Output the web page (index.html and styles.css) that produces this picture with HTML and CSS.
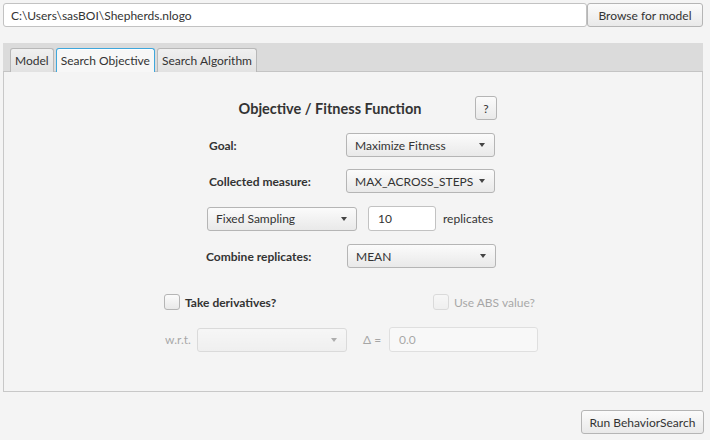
FILE: index.html
```html
<!DOCTYPE html>
<html>
<head>
<meta charset="utf-8">
<link rel="stylesheet" href="styles.css">
</head>
<body>
<div class="topbar">
  <div class="field path">C:\Users\sasBOI\Shepherds.nlogo</div>
  <div class="btn browse">Browse for model</div>
</div>

<div class="tabpane">
  <div class="tabheader">
    <div class="tab">Model</div>
    <div class="tab selected">Search Objective</div>
    <div class="tab">Search Algorithm</div>
  </div>
  <div class="tabcontent">
    <div class="row title-row">
      <div class="title">Objective / Fitness Function</div>
      <div class="btn help">?</div>
    </div>
    <div class="row goal-row">
      <div class="label w137">Goal:</div>
      <div class="combo w149"><span>Maximize Fitness</span><i class="arrow"></i></div>
    </div>
    <div class="row measure-row">
      <div class="label w137">Collected measure:</div>
      <div class="combo w149"><span>MAX_ACROSS_STEPS</span><i class="arrow"></i></div>
    </div>
    <div class="row sampling-row">
      <div class="combo w150"><span>Fixed Sampling</span><i class="arrow"></i></div>
      <div class="field reps">10</div>
      <div class="plain">replicates</div>
    </div>
    <div class="row combine-row">
      <div class="label w141">Combine replicates:</div>
      <div class="combo w149"><span>MEAN</span><i class="arrow"></i></div>
    </div>
    <div class="row deriv-row">
      <div class="check"></div>
      <div class="label">Take derivatives?</div>
      <div class="disabled abs">
        <div class="check"></div>
        <div class="plain">Use ABS value?</div>
      </div>
    </div>
    <div class="row wrt-row disabled">
      <div class="plain wrt">w.r.t.</div>
      <div class="combo w150"><span></span><i class="arrow"></i></div>
      <div class="plain delta">Δ =</div>
      <div class="field dval">0.0</div>
    </div>
  </div>
</div>

<div class="bottombar">
  <div class="btn run">Run BehaviorSearch</div>
</div>
</body>
</html>
```

FILE: styles.css
```css
* { box-sizing: border-box; }
html, body {
  margin: 0;
  padding: 0;
  background: #f4f4f4;
  font-family: Lato, "Open Sans", "Liberation Sans", sans-serif;
  font-size: 12px;
  color: #333;
  width: 710px;
  height: 440px;
  overflow: hidden;
}

.topbar {
  display: flex;
  padding: 3px 7px 0 3px;
}

.field {
  height: 24px;
  background: #fff;
  border: 1px solid #c2c2c2;
  border-radius: 3px;
  display: flex;
  align-items: center;
  padding-left: 7px;
  color: #333;
}
.path { flex: 1; }

.btn {
  height: 24px;
  border: 1px solid #b5b5b5;
  border-radius: 3px;
  background: linear-gradient(#fbfbfb, #e9e9e9);
  display: flex;
  align-items: center;
  justify-content: center;
  color: #333;
}
.browse { width: 116px; }

.tabpane {
  margin: 16px 7px 0 3px;
  height: 349px;
  display: flex;
  flex-direction: column;
}
.tabheader {
  height: 29px;
  background: #dbdbdb;
  border-bottom: 1px solid #c4c4c4;
  display: flex;
  align-items: flex-end;
  padding-left: 7px;
  gap: 2px;
}
.tab {
  height: 24px;
  margin-bottom: -1px;
  padding: 0 4px;
  border: 1px solid #b8b8b8;
  border-bottom: none;
  border-radius: 3px 3px 0 0;
  background: linear-gradient(#f0f0f0, #e2e2e2);
  display: flex;
  align-items: center;
}
.tab.selected {
  background: #f7f7f7;
  border: 1px solid #3fa7dc;
  border-bottom: none;
  box-shadow: inset 0 1px 0 #fff;
}

.tabcontent {
  flex: 1;
  border: 1px solid #c8c8c8;
  border-top: none;
  background: #f4f4f4;
}

.row {
  display: flex;
  align-items: center;
}
.title-row { margin-top: 24px; padding-left: 201px; height: 24px; }
.title {
  width: 250px;
  text-align: center;
  font-weight: bold;
  font-size: 14.5px;
}
.help { width: 22px; margin-left: 20px; }

.label { font-weight: bold; }
.w137 { width: 137px; }
.w141 { width: 141px; }
.w149 { width: 149px; }
.w150 { width: 150px; }

.goal-row { margin-top: 13px; padding-left: 205px; height: 24px; }
.measure-row { margin-top: 12px; padding-left: 205px; height: 24px; }
.sampling-row { margin-top: 13px; padding-left: 203px; height: 25px; }
.combine-row { margin-top: 13px; padding-left: 202px; height: 24px; }
.deriv-row { margin-top: 26px; padding-left: 160px; height: 16px; }
.wrt-row { margin-top: 17px; padding-left: 161px; height: 25px; }

.combo {
  height: 24px;
  border: 1px solid #b5b5b5;
  border-radius: 3px;
  background: linear-gradient(#fbfbfb, #e9e9e9);
  display: flex;
  align-items: center;
  justify-content: space-between;
  padding: 0 9px 0 8px;
}
.arrow {
  width: 0;
  height: 0;
  border-left: 3.5px solid transparent;
  border-right: 3.5px solid transparent;
  border-top: 4px solid #444;
}

.reps { width: 68px; height: 25px; margin-left: 11px; padding-left: 9px; }
.plain { color: #333; }
.sampling-row .plain { margin-left: 7px; }

.check {
  width: 16px;
  height: 16px;
  border: 1px solid #b5b5b5;
  border-radius: 3px;
  background: linear-gradient(#fbfbfb, #e9e9e9);
}
.deriv-row .label { margin-left: 5px; width: 248px; }
.disabled { opacity: 0.4; }
.abs { display: flex; align-items: center; }
.abs .plain { margin-left: 5px; }

.wrt { width: 32px; }
.delta { margin-left: 16px; width: 26px; }
.dval { width: 149px; height: 25px; padding-left: 9px; }

.bottombar {
  display: flex;
  justify-content: flex-end;
  padding: 18px 6px 0 0;
}
.run { width: 123px; }
```
